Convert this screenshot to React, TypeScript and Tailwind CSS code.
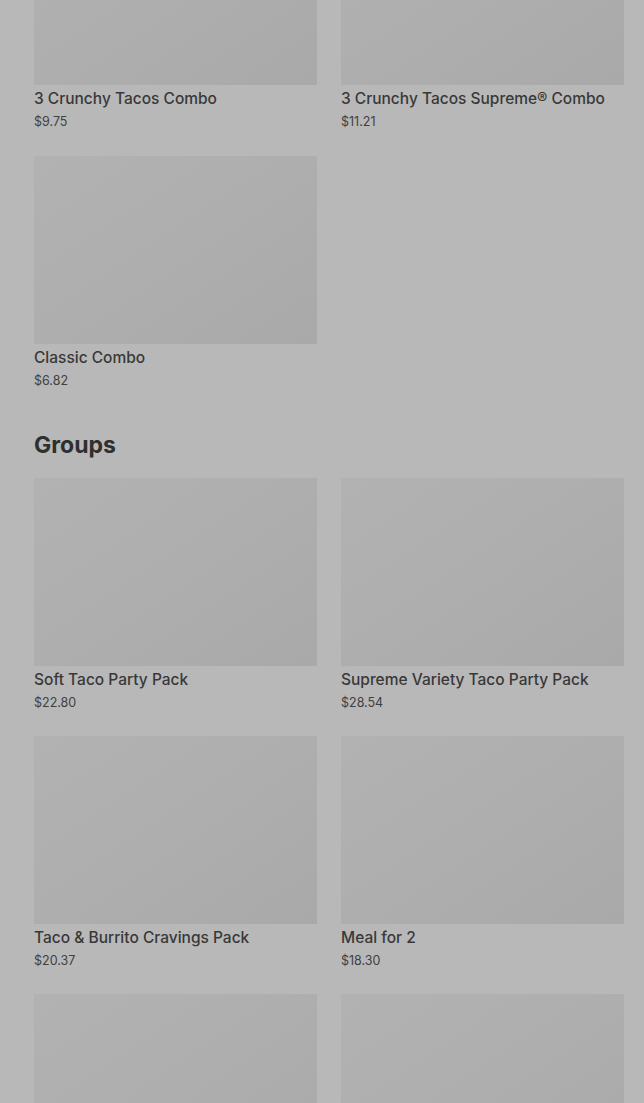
import React from "react";

type Item = { name: string; price: string };

const combos: Item[] = [
  { name: "3 Crunchy Tacos Combo", price: "$9.75" },
  { name: "3 Crunchy Tacos Supreme® Combo", price: "$11.21" },
  { name: "Classic Combo", price: "$6.82" },
];

const groups: Item[] = [
  { name: "Soft Taco Party Pack", price: "$22.80" },
  { name: "Supreme Variety Taco Party Pack", price: "$28.54" },
  { name: "Taco & Burrito Cravings Pack", price: "$20.37" },
  { name: "Meal for 2", price: "$18.30" },
  { name: "", price: "" },
  { name: "", price: "" },
];

function Card({ item }: { item: Item }) {
  return (
    <div className="flex flex-col">
      <div className="h-[188px] bg-gradient-to-br from-[#b2b2b2] via-[#aeaeae] to-[#a9a9a9]" />
      <div className="mt-1 text-[15.5px] font-medium leading-5 text-[#383838]">
        {item.name}
      </div>
      <div className="mt-1 text-[12.5px] leading-[18px] text-[#404040]">
        {item.price}
      </div>
    </div>
  );
}

export default function App() {
  return (
    <div
      className="h-[1103px] overflow-hidden bg-[#b8b8b8] pl-[34px] pr-[20px]"
      style={{ fontFamily: "Inter, 'Noto Sans', sans-serif" }}
    >
      <div className="-mt-[103px] grid grid-cols-2 gap-x-6 gap-y-[25px]">
        {combos.map((c, i) => (
          <Card key={i} item={c} />
        ))}
      </div>

      <h2 className="mt-[38px] mb-4 text-[23px] font-bold leading-[34px] text-[#2f2f2f]">
        Groups
      </h2>

      <div className="grid grid-cols-2 gap-x-6 gap-y-6">
        {groups.map((g, i) => (
          <Card key={i} item={g} />
        ))}
      </div>
    </div>
  );
}
